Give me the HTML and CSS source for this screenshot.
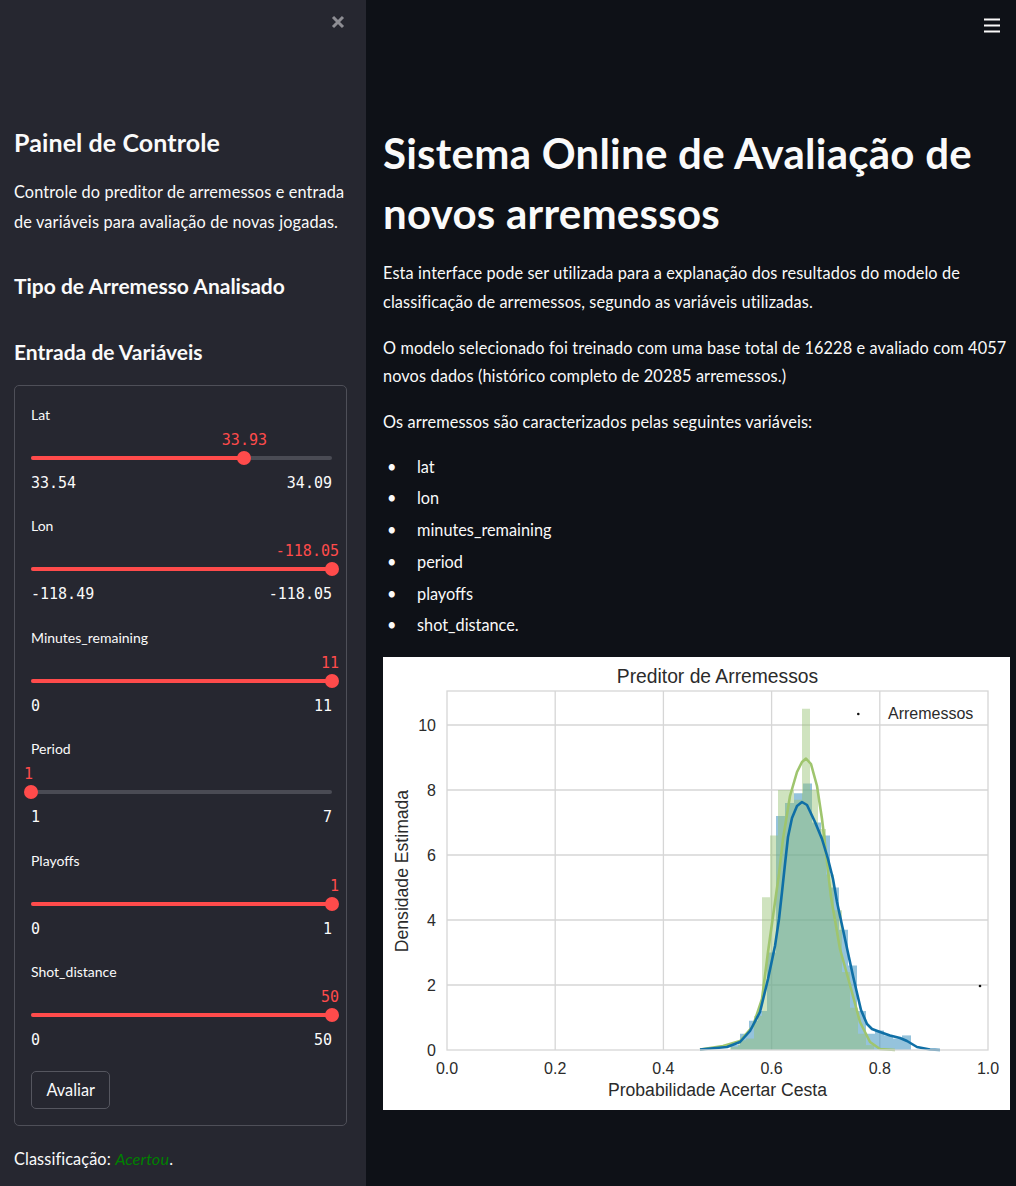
FILE: index.html
```html
<!DOCTYPE html>
<html lang="pt">
<head>
<meta charset="utf-8">
<title>Sistema Online de Avaliação</title>
<link rel="stylesheet" href="styles.css">
</head>
<body>
<div class="app">
  <aside class="sidebar">
    <div class="sb-top">
      <svg class="close" viewBox="0 0 14 14" width="14" height="14"><path d="M2 2 L12 12 M12 2 L2 12"/></svg>
    </div>
    <h2 class="sb-h sb-h-first">Painel de Controle</h2>
    <p class="sb-p">Controle do preditor de arremessos e entrada de variáveis para avaliação de novas jogadas.</p>
    <h3 class="sb-h3 sb-h-tipo">Tipo de Arremesso Analisado</h3>
    <h3 class="sb-h3 sb-h-entrada">Entrada de Variáveis</h3>
    <div class="form">
      <div class="slider">
        <div class="s-label">Lat</div>
        <div class="s-rail">
          <span class="s-value" style="left:70.9%">33.93</span>
          <div class="s-fill" style="width:70.9%"></div>
          <div class="s-thumb" style="left:70.9%"></div>
        </div>
        <div class="s-ticks"><span>33.54</span><span>34.09</span></div>
      </div>
      <div class="slider">
        <div class="s-label">Lon</div>
        <div class="s-rail">
          <span class="s-value end">-118.05</span>
          <div class="s-fill" style="width:100%"></div>
          <div class="s-thumb" style="left:100%"></div>
        </div>
        <div class="s-ticks"><span>-118.49</span><span>-118.05</span></div>
      </div>
      <div class="slider">
        <div class="s-label">Minutes_remaining</div>
        <div class="s-rail">
          <span class="s-value end">11</span>
          <div class="s-fill" style="width:100%"></div>
          <div class="s-thumb" style="left:100%"></div>
        </div>
        <div class="s-ticks"><span>0</span><span>11</span></div>
      </div>
      <div class="slider">
        <div class="s-label">Period</div>
        <div class="s-rail">
          <span class="s-value start">1</span>
          <div class="s-fill" style="width:0%"></div>
          <div class="s-thumb" style="left:0%"></div>
        </div>
        <div class="s-ticks"><span>1</span><span>7</span></div>
      </div>
      <div class="slider">
        <div class="s-label">Playoffs</div>
        <div class="s-rail">
          <span class="s-value end">1</span>
          <div class="s-fill" style="width:100%"></div>
          <div class="s-thumb" style="left:100%"></div>
        </div>
        <div class="s-ticks"><span>0</span><span>1</span></div>
      </div>
      <div class="slider">
        <div class="s-label">Shot_distance</div>
        <div class="s-rail">
          <span class="s-value end">50</span>
          <div class="s-fill" style="width:100%"></div>
          <div class="s-thumb" style="left:100%"></div>
        </div>
        <div class="s-ticks"><span>0</span><span>50</span></div>
      </div>
      <button class="btn" type="button">Avaliar</button>
    </div>
    <p class="result">Classificação: <em class="ok">Acertou</em>.</p>
  </aside>

  <main class="main">
    <div class="topbar">
      <svg class="menu" viewBox="0 0 16 15" width="16" height="15"><path d="M0 1.5 H16 M0 7.5 H16 M0 13.5 H16"/></svg>
    </div>
    <h1 class="title">Sistema Online de Avaliação de novos arremessos</h1>
    <p class="txt">Esta interface pode ser utilizada para a explanação dos resultados do modelo de classificação de arremessos, segundo as variáveis utilizadas.</p>
    <p class="txt">O modelo selecionado foi treinado com uma base total de 16228 e avaliado com 4057 novos dados (histórico completo de 20285 arremessos.)</p>
    <p class="txt">Os arremessos são caracterizados pelas seguintes variáveis:</p>
    <ul class="vars">
      <li>lat</li>
      <li>lon</li>
      <li>minutes_remaining</li>
      <li>period</li>
      <li>playoffs</li>
      <li>shot_distance.</li>
    </ul>
    <svg class="chart" viewBox="383 658 627 453" width="627" height="453">
      <rect x="383" y="658" width="627" height="453" fill="#ffffff"/>
      <g class="grid">
        <line x1="555.2" y1="692" x2="555.2" y2="1051"/>
        <line x1="663.4" y1="692" x2="663.4" y2="1051"/>
        <line x1="771.6" y1="692" x2="771.6" y2="1051"/>
        <line x1="879.8" y1="692" x2="879.8" y2="1051"/>
        <line x1="447" y1="986" x2="988" y2="986"/>
        <line x1="447" y1="921" x2="988" y2="921"/>
        <line x1="447" y1="856" x2="988" y2="856"/>
        <line x1="447" y1="791" x2="988" y2="791"/>
        <line x1="447" y1="726" x2="988" y2="726"/>
      </g>
      <g class="hist-blue">
        <rect x="731" y="1046.1" width="9" height="4.9"/>
        <rect x="740" y="1034.75" width="9" height="16.25"/>
        <rect x="749" y="1021.75" width="9" height="29.25"/>
        <rect x="758" y="1012" width="9" height="39"/>
        <rect x="767" y="953.5" width="9" height="97.5"/>
        <rect x="776" y="817" width="9" height="234"/>
        <rect x="785" y="804" width="9" height="247"/>
        <rect x="794" y="794.25" width="9" height="256.75"/>
        <rect x="803" y="784.5" width="9" height="266.5"/>
        <rect x="812" y="823.5" width="9" height="227.5"/>
        <rect x="821" y="836.5" width="9" height="214.5"/>
        <rect x="830" y="888.5" width="9" height="162.5"/>
        <rect x="839" y="930.75" width="9" height="120.25"/>
        <rect x="848" y="966.5" width="9" height="84.5"/>
        <rect x="857" y="1012" width="9" height="39"/>
        <rect x="866" y="1034.75" width="9" height="16.25"/>
        <rect x="875" y="1031.5" width="9" height="19.5"/>
        <rect x="884" y="1036.4" width="9" height="14.6"/>
        <rect x="893" y="1039.6" width="9" height="11.4"/>
        <rect x="902" y="1036.4" width="9" height="14.6"/>
      </g>
      <g class="hist-green">
        <rect x="730" y="1047.75" width="8" height="3.25"/>
        <rect x="738" y="1041.25" width="8" height="9.75"/>
        <rect x="746" y="1039.6" width="8" height="11.4"/>
        <rect x="754" y="1016.9" width="8" height="34.1"/>
        <rect x="762" y="898.25" width="8" height="152.75"/>
        <rect x="770" y="836.5" width="8" height="214.5"/>
        <rect x="778" y="791" width="8" height="260"/>
        <rect x="786" y="791" width="8" height="260"/>
        <rect x="794" y="800.75" width="8" height="250.25"/>
        <rect x="802" y="709.75" width="8" height="341.25"/>
        <rect x="810" y="791" width="8" height="260"/>
        <rect x="818" y="830" width="8" height="221"/>
        <rect x="826" y="875.5" width="8" height="175.5"/>
        <rect x="834" y="911.25" width="8" height="139.75"/>
        <rect x="842" y="973" width="8" height="78"/>
        <rect x="850" y="1008.75" width="8" height="42.25"/>
        <rect x="858" y="1034.75" width="8" height="16.25"/>
        <rect x="866" y="1046.1" width="8" height="4.9"/>
      </g>
      <polyline class="kde-green" points="700,1050.5 723,1047 740,1042 753,1027 762,1000 768,953 775,903 779,875 783,840 790,797 797,773 802,763 806,759.5 811,765 817,787 822,820 825,845 828,872 831,898 840,950 850,986 860,1023 870,1043 880,1050 895,1051"/>
      <polyline class="kde-blue" points="700,1050.5 727,1048 740,1043 750,1032 760,1013 768,980 775,947 779,920 782,893 785,865 788,838 792,819 797,807 802,803 807,806 815,823 822,840 828,860 833,880 837,903 845,940 853,977 861,1011 867,1025 872,1030 880,1033 890,1036.5 900,1039 907,1042 917,1048 930,1050.5 940,1051"/>
      <rect class="frame" x="447" y="692" width="541" height="359"/>
      <circle cx="858.3" cy="715" r="1.3" fill="#111"/>
      <circle cx="980" cy="987" r="1.3" fill="#111"/>
      <g class="ctext">
        <text class="c-title" x="717.5" y="684">Preditor de Arremessos</text>
        <text class="c-leg" x="888" y="720">Arremessos</text>
        <text class="c-yt" x="436" y="1056.7">0</text>
        <text class="c-yt" x="436" y="991.7">2</text>
        <text class="c-yt" x="436" y="926.7">4</text>
        <text class="c-yt" x="436" y="861.7">6</text>
        <text class="c-yt" x="436" y="796.7">8</text>
        <text class="c-yt" x="436" y="731.7">10</text>
        <text class="c-xt" x="447" y="1075">0.0</text>
        <text class="c-xt" x="555.2" y="1075">0.2</text>
        <text class="c-xt" x="663.4" y="1075">0.4</text>
        <text class="c-xt" x="771.6" y="1075">0.6</text>
        <text class="c-xt" x="879.8" y="1075">0.8</text>
        <text class="c-xt" x="988" y="1075">1.0</text>
        <text class="c-axl" x="717.5" y="1097">Probabilidade Acertar Cesta</text>
        <text class="c-axl" x="408" y="872" transform="rotate(-90 408 872)">Densidade Estimada</text>
      </g>
    </svg>
  </main>
</div>
</body>
</html>
```

FILE: styles.css
```css
* { box-sizing: border-box; }

html, body {
  margin: 0;
  padding: 0;
}

body {
  font-family: Lato, "Noto Sans", sans-serif;
  color: #fafafa;
  background: #0e1117;
}

.app {
  display: flex;
  min-height: 1186px;
}

/* ---------- sidebar ---------- */
.sidebar {
  width: 366px;
  flex: none;
  background: #262730;
  padding: 0 19px 0 14px;
  display: flex;
  flex-direction: column;
}

.sb-top {
  height: 44px;
  display: flex;
  justify-content: flex-end;
  align-items: center;
  padding-right: 2px;
}

.close {
  display: block;
  fill: none;
  stroke: #8e8e94;
  stroke-width: 3;
  stroke-linecap: butt;
}

.sb-h {
  margin: 0;
  font-size: 25px;
  line-height: 36px;
  font-weight: 700;
  letter-spacing: 0.1px;
}

.sb-h3 {
  margin: 0;
  font-size: 21px;
  line-height: 36px;
  font-weight: 700;
}

.sb-h-first { margin-top: 80px; }
.sb-h-tipo { margin-top: 31px; }
.sb-h-entrada { margin-top: 30px; }

.sb-p {
  margin: 17px 0 0;
  font-size: 16.3px;
  line-height: 30px;
  letter-spacing: 0.15px;
}

.form {
  margin-top: 15px;
  border: 1px solid #4e4f58;
  border-radius: 5px;
  padding: 19px 14px 16px 16px;
  display: flex;
  flex-direction: column;
}

.slider + .slider { margin-top: 23.4px; }

.s-label {
  font-size: 14px;
  line-height: 20px;
}

.s-rail {
  position: relative;
  margin-top: 25px;
  height: 16px;
}

.s-rail::before {
  content: "";
  position: absolute;
  left: 0;
  right: 0;
  top: 6px;
  height: 4px;
  border-radius: 2px;
  background: #4a4b54;
}

.s-fill {
  position: absolute;
  left: 0;
  top: 6px;
  height: 4px;
  border-radius: 2px;
  background: #ff4b4b;
}

.s-thumb {
  position: absolute;
  top: 1px;
  width: 14px;
  height: 14px;
  margin-left: -7px;
  border-radius: 50%;
  background: #ff4b4b;
}

.s-value {
  position: absolute;
  bottom: 100%;
  transform: translateX(-50%);
  font-family: "DejaVu Sans Mono", "Liberation Mono", monospace;
  font-size: 15px;
  line-height: 20px;
  color: #ff4b4b;
  white-space: nowrap;
}

.s-value.end {
  left: auto;
  right: -7px;
  transform: none;
}

.s-value.start {
  left: -7px;
  transform: none;
}

.s-ticks {
  margin-top: 7px;
  display: flex;
  justify-content: space-between;
  font-family: "DejaVu Sans Mono", "Liberation Mono", monospace;
  font-size: 15px;
  line-height: 20px;
}

.btn {
  align-self: flex-start;
  margin-top: 21px;
  height: 38px;
  padding: 0 14.5px;
  border: 1px solid #55565f;
  border-radius: 5px;
  background: #262730;
  color: #fafafa;
  font-family: Lato, "Noto Sans", sans-serif;
  font-size: 16.3px;
}

.result {
  margin: 20.5px 0 0;
  font-size: 16.3px;
  line-height: 25px;
  letter-spacing: 0.1px;
}

.ok {
  color: #008000;
}

/* ---------- main ---------- */
.main {
  flex: 1;
  padding: 0 6px 0 17px;
}

.topbar {
  height: 123px;
  display: flex;
  justify-content: flex-end;
  padding-top: 18px;
  padding-right: 10px;
}

.menu {
  display: block;
  fill: none;
  stroke: #fafafa;
  stroke-width: 2;
}

.title {
  margin: 0;
  font-size: 42px;
  line-height: 60px;
  font-weight: 700;
  letter-spacing: 0.25px;
}

.txt {
  margin: 16px 0 0;
  font-size: 16.3px;
  line-height: 28.5px;
  letter-spacing: 0.12px;
}

.txt + .txt { margin-top: 17.5px; }

.vars {
  list-style: none;
  margin: 16px 0 0;
  padding: 0 0 0 30px;
  font-size: 16.3px;
  line-height: 28.5px;
}

.vars li + li { margin-top: 3.25px; }

.vars li::before {
  content: "\2022";
  display: inline-block;
  width: 30px;
  margin-left: -30px;
  padding-left: 4px;
}

.chart {
  display: block;
  margin-top: 17px;
}

.grid line {
  stroke: #d6d6d6;
  stroke-width: 1.3;
}

.hist-blue rect {
  fill: #2b87ba;
  fill-opacity: 0.5;
}

.hist-green rect {
  fill: #94c172;
  fill-opacity: 0.45;
}

.kde-green {
  fill: none;
  stroke: #9fc56e;
  stroke-width: 2.6;
  stroke-linejoin: round;
}

.kde-blue {
  fill: none;
  stroke: #0f6fa6;
  stroke-width: 2.6;
  stroke-linejoin: round;
}

.frame {
  fill: none;
  stroke: #d6d6d6;
  stroke-width: 1.3;
}

.ctext text {
  font-family: "Liberation Sans", Arial, sans-serif;
  fill: #2b2b2b;
}

.c-title {
  font-size: 19.3px;
  text-anchor: middle;
}

.c-leg {
  font-size: 16px;
}

.c-yt {
  font-size: 16px;
  text-anchor: end;
}

.c-xt {
  font-size: 16px;
  text-anchor: middle;
}

.c-axl {
  font-size: 17.6px;
  text-anchor: middle;
}
```
